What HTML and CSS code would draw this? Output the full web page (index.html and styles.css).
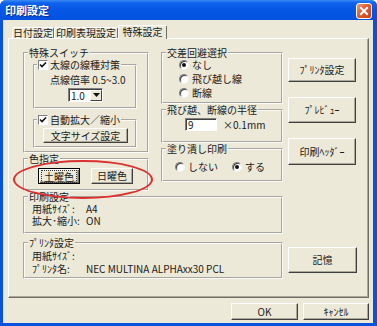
FILE: index.html
```html
<!DOCTYPE html>
<html lang="ja">
<head>
<meta charset="utf-8">
<title>印刷設定</title>
<link rel="stylesheet" href="styles.css">
</head>
<body>
<div class="win">
  <div class="titlebar">
    <span class="title">印刷設定</span>
    <span class="close"><svg width="14" height="14" viewBox="0 0 14 14"><path d="M4 4L10 10M10 4L4 10" stroke="#fff" stroke-width="2" stroke-linecap="square"/></svg></span>
  </div>
  <div class="client">
    <div class="tabs">
      <div class="tab t1">日付設定</div>
      <div class="tab t2">印刷表現設定</div>
      <div class="tab t3 sel">特殊設定</div>
    </div>
    <div class="panel">
      <div class="top">
        <div class="col1">
          <fieldset class="grp g-toku">
            <legend>特殊スイッチ</legend>
            <fieldset class="grp g-sub g-futo">
              <legend class="chk"><span class="cb"><svg width="10" height="10" viewBox="0 0 10 10"><path d="M2 4.5L4 6.5L8 2.5" fill="none" stroke="#111" stroke-width="1.6"/></svg></span>太線の線種対策</legend>
              <div class="note">点線倍率 0.5~3.0</div>
              <div class="combo"><span class="cval">1.0</span><span class="cbtn"><svg width="7" height="4" viewBox="0 0 7 4"><path d="M0 0H7L3.5 4Z" fill="#111"/></svg></span></div>
            </fieldset>
            <fieldset class="grp g-sub g-auto">
              <legend class="chk"><span class="cb"><svg width="10" height="10" viewBox="0 0 10 10"><path d="M2 4.5L4 6.5L8 2.5" fill="none" stroke="#111" stroke-width="1.6"/></svg></span>自動拡大／縮小</legend>
              <button class="btn b-moji">文字サイズ設定</button>
            </fieldset>
          </fieldset>
          <fieldset class="grp g-color">
            <legend>色指定</legend>
            <div class="colorbtns">
              <button class="btn b-col focus"><span class="fr">土曜色</span></button>
              <button class="btn b-col">日曜色</button>
            </div>
          </fieldset>
        </div>
        <div class="col2">
          <fieldset class="grp g-kosa">
            <legend>交差回避選択</legend>
            <div class="radios">
              <div class="rrow"><span class="rd on"></span>なし</div>
              <div class="rrow"><span class="rd"></span>飛び越し線</div>
              <div class="rrow"><span class="rd"></span>断線</div>
            </div>
          </fieldset>
          <fieldset class="grp g-hankei">
            <legend>飛び越、断線の半径</legend>
            <div class="inrow"><span class="field">9</span><span class="unit">×0.1mm</span></div>
          </fieldset>
          <fieldset class="grp g-nuri">
            <legend>塗り潰し印刷</legend>
            <div class="hradios">
              <div class="rrow r-off"><span class="rd"></span>しない</div>
              <div class="rrow"><span class="rd on"></span>する</div>
            </div>
          </fieldset>
        </div>
        <div class="col3">
          <button class="btn b-side b1">ﾌﾟﾘﾝﾀ設定</button>
          <button class="btn b-side b2">ﾌﾟﾚﾋﾞｭｰ</button>
          <button class="btn b-side b3">印刷ﾍｯﾀﾞｰ</button>
        </div>
      </div>
      <fieldset class="grp g-info g-print">
        <legend>印刷設定</legend>
        <div class="kv"><span class="k">用紙ｻｲｽﾞ:</span><span class="v">A4</span></div>
        <div class="kv"><span class="k">拡大･縮小:</span><span class="v">ON</span></div>
      </fieldset>
      <div class="prow">
        <fieldset class="grp g-info g-printer">
          <legend>ﾌﾟﾘﾝﾀ設定</legend>
          <div class="kv"><span class="k">用紙ｻｲｽﾞ:</span><span class="v"></span></div>
          <div class="kv"><span class="k">ﾌﾟﾘﾝﾀ名:</span><span class="v">NEC MULTINA ALPHAxx30 PCL</span></div>
        </fieldset>
        <button class="btn b-kioku">記憶</button>
      </div>
    </div>
    <div class="footer">
      <button class="btn b-ok">OK</button>
      <button class="btn b-cancel">ｷｬﾝｾﾙ</button>
    </div>
  </div>
  <div class="ellipse"></div>
</div>
</body>
</html>
```
FILE: styles.css
```css
* { box-sizing: border-box; }
html, body { margin: 0; padding: 0; background: #fff; }
body {
  width: 377px; height: 326px; overflow: hidden;
  font-family: "Noto Sans CJK JP", "Noto Sans", sans-serif;
  font-size: 10px; line-height: 12px; color: #1a1a1a;
}
.win {
  position: relative;
  width: 377px; height: 326px;
  background: #0852DC;
  border-radius: 6px 6px 0 0;
  display: flex; flex-direction: column;
  overflow: hidden;
}
.titlebar {
  height: 20px; flex: none;
  display: flex; align-items: center;
  background: linear-gradient(to bottom, #3C8CF6 0, #0E62EC 3px, #0657E6 45%, #0452DE 100%);
}
.title {
  padding-left: 5px;
  color: #fff; font-weight: bold; font-size: 11px;
  text-shadow: 1px 1px 0 #0B2C94;
}
.close {
  margin-left: auto; margin-right: 5px; margin-top: 1px;
  width: 16px; height: 16px;
  display: flex; align-items: center; justify-content: center;
  border: 1px solid #fff; border-radius: 3px;
  background: linear-gradient(135deg, #F19A7A 0, #E2603A 40%, #C8401C 100%);
}
.client {
  flex: 1;
  margin: 0 4px 3px 3px;
  background: #ECE9D8;
  padding: 5px 4px 0 5px;
  display: flex; flex-direction: column;
}
.tabs {
  height: 13px; display: flex; align-items: flex-end;
  padding-left: 4px;
}
.tab {
  height: 11px; display: flex; align-items: center; justify-content: center;
  border: 1px solid; border-bottom: none;
  border-color: #fff #716F64 transparent #fff;
  border-radius: 2px 2px 0 0;
  background: #ECE9D8;
  white-space: nowrap;
}
.t1 { width: 42px; }
.t2 { width: 64px; }
.t3 { width: 49px; }
.tab.sel {
  height: 14px; margin-bottom: -1px;
  position: relative; z-index: 1;
  padding-bottom: 1px;
}
.panel {
  width: 361px; height: 260px;
  border: 1px solid; border-color: #fff #716F64 #716F64 #fff;
  box-shadow: inset -1px -1px 0 #ACA899;
  padding: 8px 0 0 14px;
}
.top { display: flex; }
.col1 { width: 126px; display: flex; flex-direction: column; }
.col2 { width: 122px; margin-left: 12px; display: flex; flex-direction: column; }
.col3 { width: 69px; margin-left: 5px; display: flex; flex-direction: column; }

fieldset.grp {
  margin: 0; min-width: 0;
  padding: 0 3px;
  border: 2px groove #fbfaf4;
}
fieldset.grp > legend {
  padding: 0 1px; height: 12px; line-height: 12px;
  white-space: nowrap;
}
.g-toku { height: 106px; }
.g-sub { margin: 0 7px 0 5px !important; padding: 0 2px !important; }
.g-futo { height: 50px; }
.g-auto { height: 34px; margin-top: 5px !important; }
legend.chk { display: flex; align-items: center; gap: 2px; }
.cb {
  width: 10px; height: 10px; background: #fff;
  border: 1px solid; border-color: #808080 #fff #fff #808080;
  display: flex; align-items: center; justify-content: center;
}
.cb svg { flex: none; }
.note { margin-top: 3px; padding-left: 13px; white-space: nowrap; }
.combo {
  margin: 2px 0 0 31px; width: 35px; height: 14px;
  background: #fff;
  border: 1px solid; border-color: #808080 #fff #fff #808080;
  box-shadow: inset 1px 1px 0 #404040;
  display: flex; align-items: center;
}
.cval { padding-left: 2px; flex: 1; line-height: 11px; }
.cbtn {
  width: 12px; height: 11px; margin-right: 0;
  background: #ECE9D8;
  border: 1px solid; border-color: #fff #404040 #404040 #fff;
  display: flex; align-items: center; justify-content: center;
}
.btn {
  font: inherit; color: inherit; margin: 0; padding: 0;
  background: #ECE9D8;
  border: 1px solid; border-color: #fff #404040 #404040 #fff;
  box-shadow: inset -1px -1px 0 #ACA899;
  display: flex; align-items: center; justify-content: center;
  white-space: nowrap; line-height: 12px;
}
.b-moji { margin: 2px 0 0 6px; width: 85px; height: 15px; }
.g-color { height: 38px; margin-top: 7px; }
.colorbtns { display: flex; gap: 11px; margin: 3px 0 0 10px; }
.b-col { width: 42px; height: 16px; }
.btn.focus {
  border: 1px solid #000;
  box-shadow: inset 1px 1px 0 #fff, inset -1px -1px 0 #716F64, inset -2px -2px 0 #ACA899;
}
.fr { outline: 1px dotted #333; outline-offset: 0; padding: 0 2px; line-height: 11px; }

.g-kosa { height: 57px; }
.radios { margin-top: -1px; padding-left: 13px; }
.rrow { height: 14px; line-height: 12px; display: flex; align-items: center; white-space: nowrap; }
.rd {
  width: 10px; height: 10px; border-radius: 50%;
  background: #fff;
  border: 1px solid; border-color: #808080 #f4f3ee #f4f3ee #808080;
  box-shadow: inset 1px 1px 0 #404040;
  margin-right: 3px; flex: none;
  display: flex; align-items: center; justify-content: center;
}
.rd.on::after {
  content: ""; width: 4px; height: 4px; border-radius: 50%; background: #111;
}
.g-hankei { height: 39px; margin-top: 10px; }
.inrow { display: flex; align-items: center; margin: 2px 0 0 19px; }
.field {
  width: 32px; height: 13px; background: #fff;
  border: 1px solid; border-color: #808080 #fff #fff #808080;
  box-shadow: inset 1px 1px 0 #404040;
  padding-left: 2px; line-height: 11px;
}
.unit { margin-left: 6px; }
.g-nuri { height: 39px; margin-top: 6px; }
.hradios { display: flex; margin: 5px 0 0 9px; }
.r-off { width: 57px; }

.b-side { width: 68px; }
.b1 { margin-top: 11px; height: 24px; }
.b2 { margin-top: 15px; height: 26px; }
.b3 { margin-top: 15px; height: 27px; }

.g-info { width: 260px; }
.g-print { height: 43px; margin-top: 3px; padding-top: 1px; }
.g-print .kv { height: 12px; }
.kv { display: flex; align-items: center; padding-left: 4px; white-space: nowrap; }
.k { width: 54px; }
.prow { display: flex; margin-top: 3px; }
.g-printer { height: 42px; }
.g-printer .kv { height: 13px; }
.b-kioku { margin: 10px 0 0 5px; width: 69px; height: 26px; }

.footer {
  display: flex; justify-content: flex-end; gap: 5px;
  margin-top: 5px; padding-right: 0;
}
.b-ok { width: 67px; height: 17px; }
.b-cancel { width: 66px; height: 17px; }

.ellipse {
  position: absolute; left: 13px; top: 160px;
  width: 140px; height: 39px;
  border: 2px solid #DA3030; border-radius: 50%;
  pointer-events: none;
}
```
